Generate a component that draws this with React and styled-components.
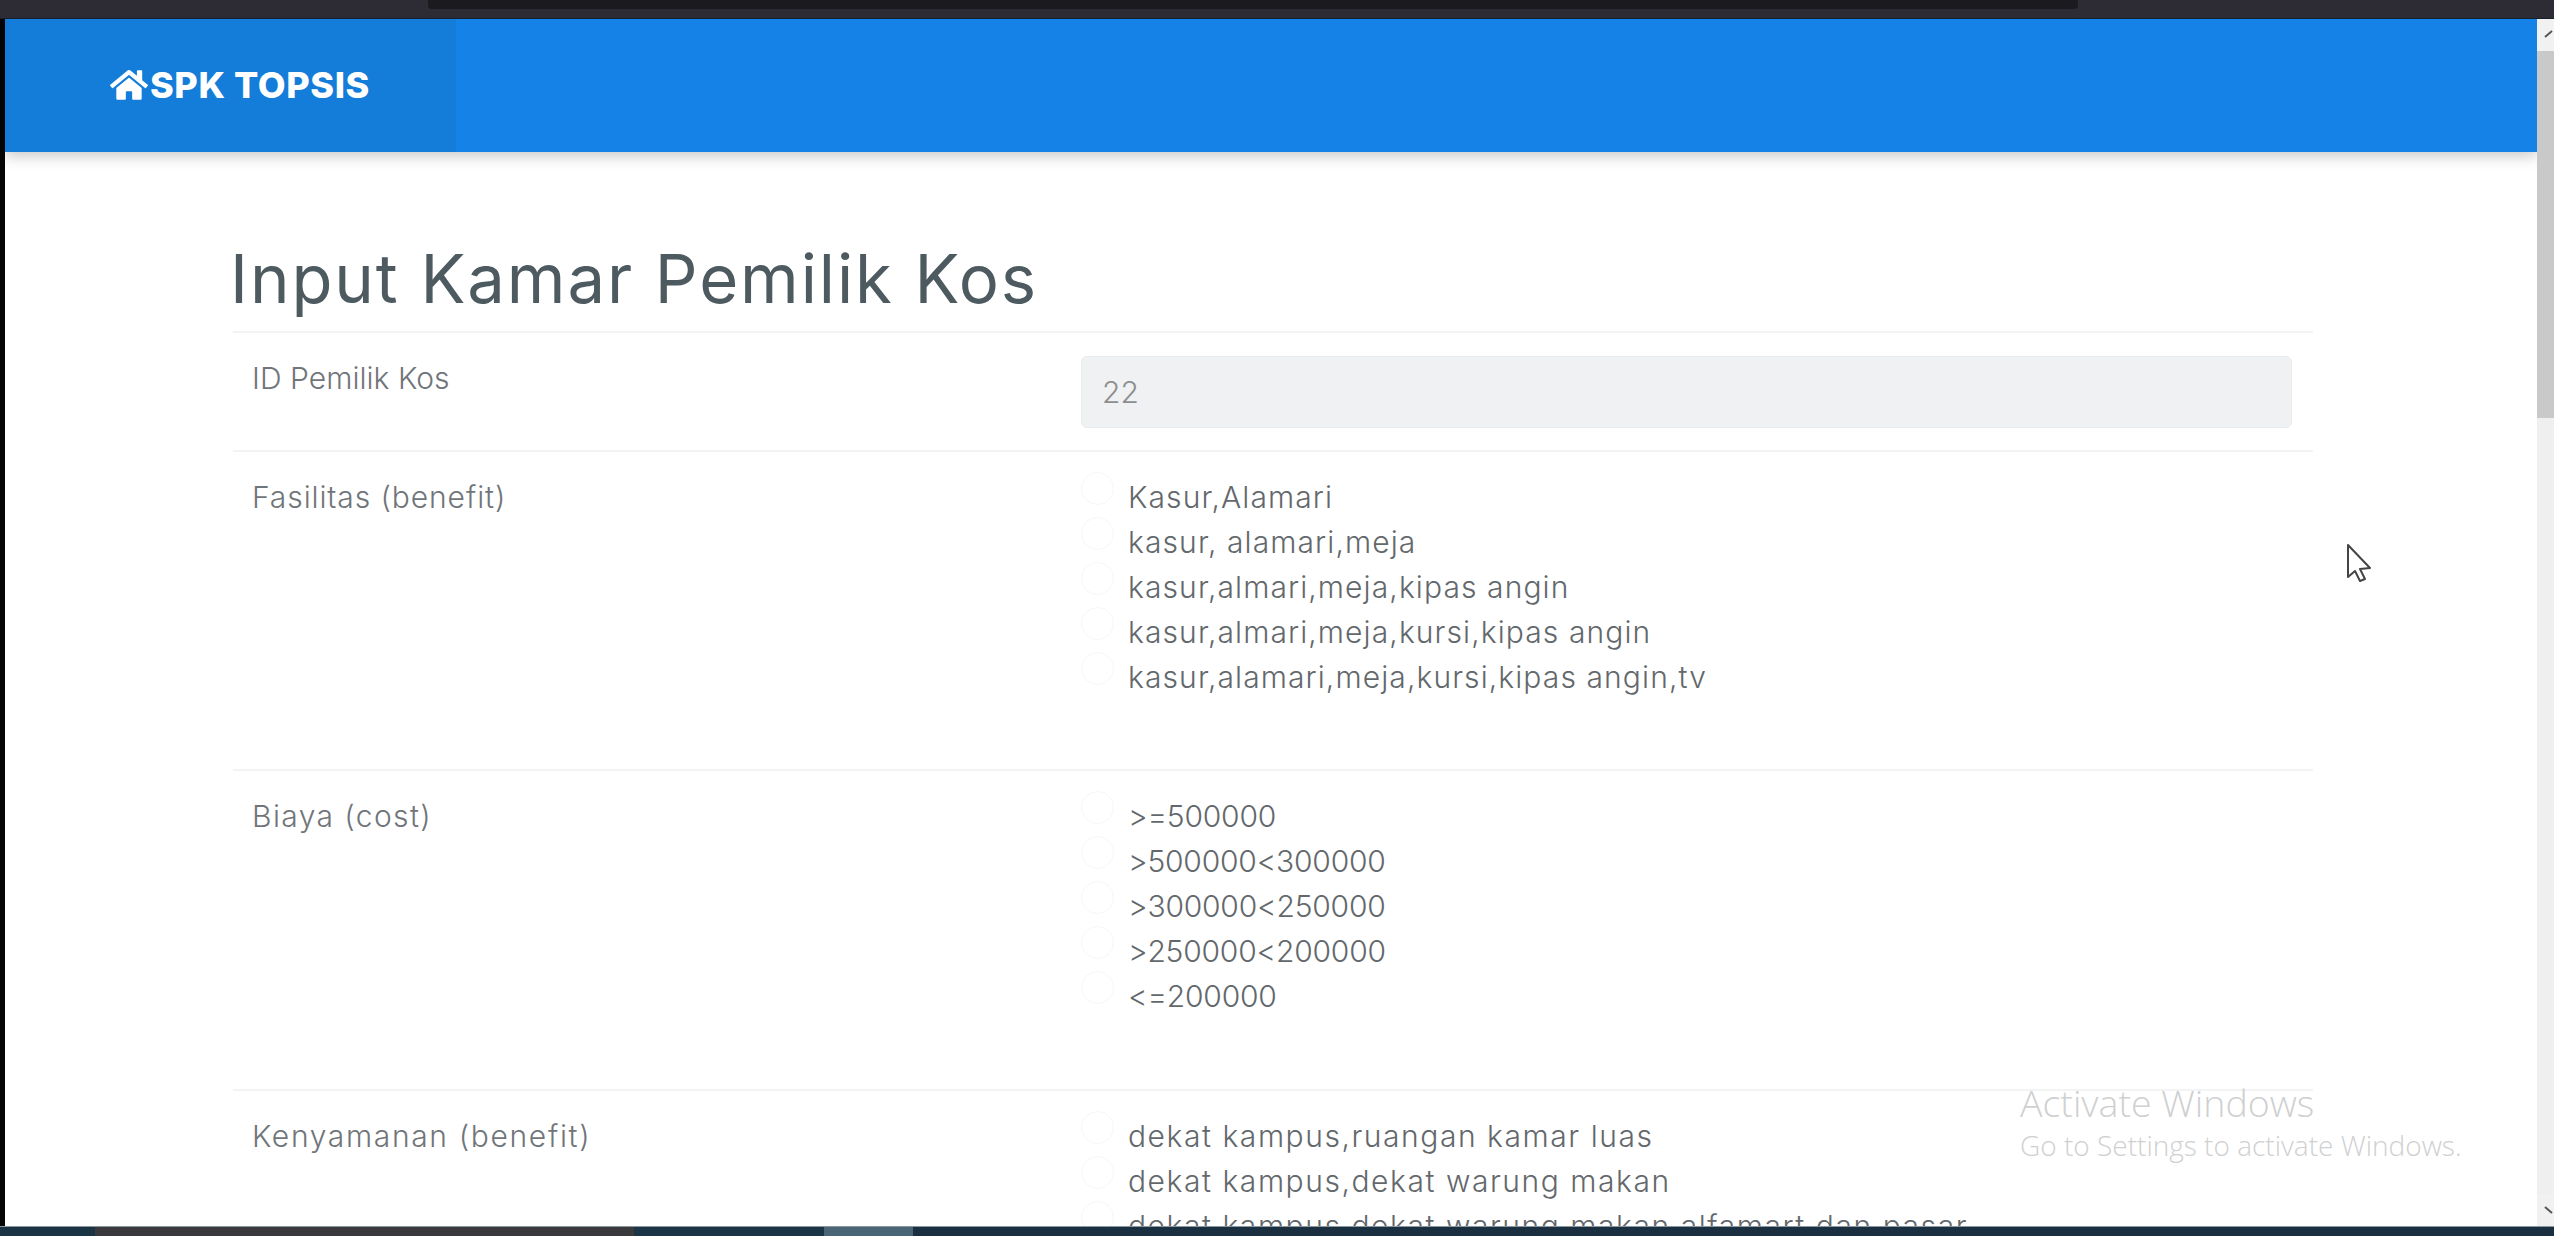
import React from 'react';
import styled, { createGlobalStyle } from 'styled-components';
import { FaHome } from 'react-icons/fa';

const GlobalS = createGlobalStyle`
  html, body {
    margin: 0;
    padding: 0;
    background: #fff;
    overflow: hidden;
  }
  * {
    box-sizing: border-box;
  }
`;

const ScreenS = styled.div`
  display: flex;
  flex-direction: column;
  position: relative;
  width: 2554px;
  height: 1236px;
  overflow: hidden;
  background: #fff;
  font-family: 'Inter', 'Liberation Sans', sans-serif;
`;

const TopStripS = styled.div`
  display: flex;
  justify-content: center;
  flex: 0 0 19px;
  padding-right: 48px;
  background: #2d2b33;
  border-bottom: 1px solid #14202c;
`;

const TabBarS = styled.div`
  width: 1650px;
  height: 9px;
  background: #1a1a1f;
  border-radius: 0 0 4px 4px;
`;

const BodyS = styled.div`
  display: flex;
  flex: 1;
  min-height: 0;
  border-left: 5px solid #050505;
`;

const PageS = styled.div`
  flex: 1;
  min-width: 0;
  overflow: hidden;
  background: #fff;
`;

const NavbarS = styled.div`
  position: relative;
  display: flex;
  height: 133px;
  background: #1482e6;
  box-shadow: 0 4px 14px rgba(0, 0, 0, 0.22);
`;

const BrandS = styled.div`
  display: flex;
  align-items: center;
  width: 451px;
  padding: 0 0 2px 105px;
  gap: 2px;
  background: #147dd9;
  color: #fff;
  font-size: 36px;
  font-weight: 800;
  letter-spacing: 0.6px;
  white-space: nowrap;
`;

const ContentS = styled.div`
  width: 2080px;
  margin-left: 228px;
`;

const TitleS = styled.h1`
  margin: 88px 0 0 -3px;
  height: 91px;
  font-size: 67px;
  line-height: 78px;
  font-weight: 400;
  letter-spacing: 1.9px;
  color: #4d5b61;
  white-space: nowrap;
`;

const RowS = styled.div`
  display: grid;
  grid-template-columns: 829px 1fr;
  height: ${(props) => props.height};
  padding: ${(props) => props.pad} 21px 0 19px;
  border-top: 2px solid #f2f3f3;
`;

const LabelS = styled.div`
  font-size: 30px;
  font-weight: 300;
  line-height: 45px;
  letter-spacing: ${(props) => props.spacing};
  color: #70757a;
  white-space: nowrap;
`;

const FieldS = styled.input`
  display: block;
  width: 100%;
  height: 72px;
  padding: 0 20px;
  border: 1px solid #e9ebed;
  border-radius: 6px;
  background: #eff1f3;
  font-family: inherit;
  font-size: 30px;
  font-weight: 300;
  color: #8c8e90;
`;

const OptionS = styled.label`
  display: flex;
  gap: 14px;
  height: 45px;
  font-size: 30px;
  line-height: 45px;
  font-weight: 300;
  letter-spacing: ${(props) => props.spacing};
  color: #63686c;
  white-space: nowrap;
`;

const RadioS = styled.input`
  flex: 0 0 33px;
  appearance: none;
  width: 33px;
  height: 33px;
  margin: -3px 0 0 0;
  border: 1px solid #f6f7f7;
  border-radius: 50%;
  background: #fff;
`;

const ScrollS = styled.div`
  display: flex;
  flex-direction: column;
  flex: 0 0 17px;
  background: #efefef;
`;

const ScrollBtnS = styled.div`
  display: flex;
  justify-content: flex-end;
  align-items: center;
  flex: 0 0 32px;
  background: #f1f1f1;
  overflow: hidden;
`;

const ThumbS = styled.div`
  flex: 0 0 367px;
  background: #c9c9c9;
`;

const FillS = styled.div`
  flex: 1;
`;

const BottomStripS = styled.div`
  display: flex;
  flex: 0 0 10px;
  background: #1a2f40;
  border-top: 1px solid #8b98a2;
`;

const SegmentS = styled.div`
  width: ${(props) => props.width};
  background: ${(props) => props.color};
`;

const ActivateS = styled.div`
  position: absolute;
  left: 2020px;
  top: 1080px;
  font-family: 'Open Sans', 'Noto Sans', sans-serif;
  font-weight: 300;
  color: #cfd0d1;
  white-space: nowrap;
`;

const ActivateTitleS = styled.div`
  font-size: 37.5px;
  line-height: 46px;
`;

const ActivateHintS = styled.div`
  font-size: 28px;
  line-height: 38px;
`;

const CursorS = styled.svg`
  position: absolute;
  left: 2345px;
  top: 543px;
`;

const fasilitas = [
  'Kasur,Alamari',
  'kasur, alamari,meja',
  'kasur,almari,meja,kipas angin',
  'kasur,almari,meja,kursi,kipas angin',
  'kasur,alamari,meja,kursi,kipas angin,tv',
];

const biaya = ['>=500000', '>500000<300000', '>300000<250000', '>250000<200000', '<=200000'];

const kenyamanan = [
  'dekat kampus,ruangan kamar luas',
  'dekat kampus,dekat warung makan',
  'dekat kampus,dekat warung makan,alfamart dan pasar',
];

function Options({ name, items, spacing }) {
  return (
    <div>
      {items.map((item) => (
        <OptionS key={item} spacing={spacing}>
          <RadioS type="radio" name={name} />
          {item}
        </OptionS>
      ))}
    </div>
  );
}

function App() {
  return (
    <ScreenS>
      <GlobalS />
      <TopStripS>
        <TabBarS />
      </TopStripS>

      <BodyS>
        <PageS>
          <NavbarS>
            <BrandS>
              <FaHome size={38} />
              SPK TOPSIS
            </BrandS>
          </NavbarS>

          <ContentS>
            <TitleS>Input Kamar Pemilik Kos</TitleS>

            <RowS height="119px" pad="23px">
              <LabelS spacing="0.05px">ID Pemilik Kos</LabelS>
              <FieldS disabled value="22" readOnly />
            </RowS>

            <RowS height="319px" pad="23px">
              <LabelS spacing="0.9px">Fasilitas (benefit)</LabelS>
              <Options name="fasilitas" items={fasilitas} spacing="1.1px" />
            </RowS>

            <RowS height="320px" pad="23px">
              <LabelS spacing="1.4px">Biaya (cost)</LabelS>
              <Options name="biaya" items={biaya} spacing="-0.2px" />
            </RowS>

            <RowS height="320px" pad="23px">
              <LabelS spacing="1.65px">Kenyamanan (benefit)</LabelS>
              <Options name="kenyamanan" items={kenyamanan} spacing="1.55px" />
            </RowS>
          </ContentS>
        </PageS>

        <ScrollS>
          <ScrollBtnS>
            <svg width="10" height="12" viewBox="0 0 10 12">
              <path d="M1 8 L8 2" stroke="#555" strokeWidth="2" fill="none" />
            </svg>
          </ScrollBtnS>
          <ThumbS />
          <FillS />
          <ScrollBtnS>
            <svg width="10" height="12" viewBox="0 0 10 12">
              <path d="M1 3 L8 9" stroke="#555" strokeWidth="2" fill="none" />
            </svg>
          </ScrollBtnS>
        </ScrollS>
      </BodyS>

      <BottomStripS>
        <SegmentS width="95px" color="#1b3444" />
        <SegmentS width="539px" color="#3a3a3c" />
        <SegmentS width="190px" color="#1c3546" />
        <SegmentS width="89px" color="#4a6676" />
      </BottomStripS>

      <ActivateS>
        <ActivateTitleS>Activate Windows</ActivateTitleS>
        <ActivateHintS>Go to Settings to activate Windows.</ActivateHintS>
      </ActivateS>

      <CursorS width="30" height="42" viewBox="0 0 30 42">
        <path
          d="M3 2 L3 34 L10 28 L15 38 L20 36 L15 26 L25 25 Z"
          fill="#fff"
          stroke="#444"
          strokeWidth="2"
          strokeLinejoin="round"
        />
      </CursorS>
    </ScreenS>
  );
}

export default App;
